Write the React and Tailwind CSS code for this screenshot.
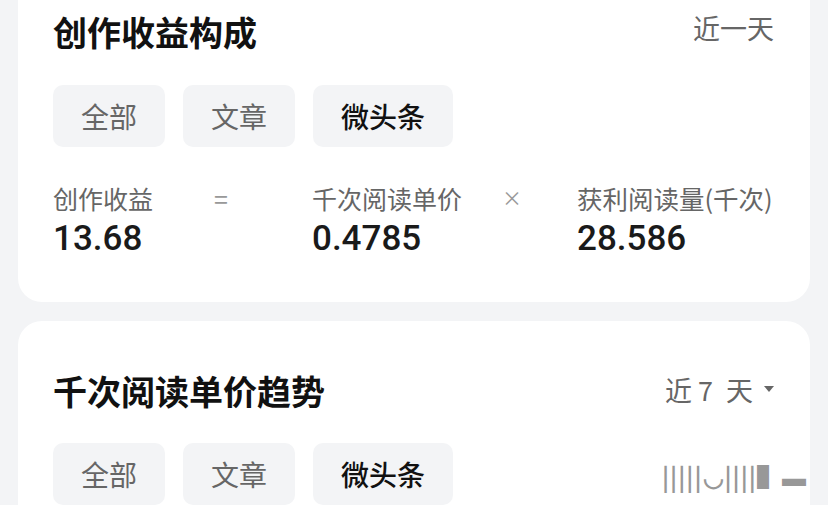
import React from 'react';

const FONT = { fontFamily: '"Noto Sans CJK SC", "Noto Sans", sans-serif' };
const NUM = { fontFamily: 'Roboto, "Noto Sans CJK SC", sans-serif' };

const TABS = ['全部', '文章', '微头条'];

function Tabs({ active }) {
  return (
    <div className="flex gap-[18px]">
      {TABS.map(t => (
        <div key={t}
          className={`h-[62px] px-[28px] flex items-center justify-center rounded-[10px] bg-[#f3f4f6] text-[28px] leading-none ${t === active ? 'text-[#111] font-medium' : 'text-[#666]'}`}>
          {t}
        </div>
      ))}
    </div>
  );
}

export default function App() {
  return (
    <div className="w-[828px] h-[505px] overflow-hidden bg-[#f3f4f6] px-[18px] relative" style={FONT}>
      {/* 收益构成 */}
      <div className="bg-white rounded-b-[24px] pl-[35px] pr-[36px] pt-[12px] pb-[43px]">
        <div className="flex items-center justify-between h-[40px]">
          <h2 className="text-[34px] font-bold text-[#111] leading-none">创作收益构成</h2>
          <span className="text-[27px] text-[#666] leading-none -mt-[10px]">近一天</span>
        </div>
        <div className="mt-[33px]">
          <Tabs active="微头条" />
        </div>
        <div className="flex mt-[35px]">
          <div className="w-[161px]">
            <p className="text-[25px] leading-[32px] text-[#666]">创作收益</p>
            <p className="text-[35px] leading-[40px] font-medium text-[#1a1a1a] mt-[5px]" style={NUM}>13.68</p>
          </div>
          <div className="w-[98px] text-[25px] leading-[32px] text-[#999]">=</div>
          <div className="w-[190px]">
            <p className="text-[25px] leading-[32px] text-[#666]">千次阅读单价</p>
            <p className="text-[35px] leading-[40px] font-medium text-[#1a1a1a] mt-[5px]" style={NUM}>0.4785</p>
          </div>
          <div className="w-[75px] text-[20px] leading-[32px] text-[#999]">×</div>
          <div className="flex-1">
            <p className="text-[25.5px] leading-[32px] text-[#666] whitespace-nowrap">获利阅读量(千次)</p>
            <p className="text-[35px] leading-[40px] font-medium text-[#1a1a1a] mt-[5px]" style={NUM}>28.586</p>
          </div>
        </div>
      </div>

      {/* 单价趋势 */}
      <div className="bg-white rounded-[24px] mt-[19px] pl-[35px] pr-[36px] pt-[50px] pb-[40px]">
        <div className="flex items-center justify-between h-[40px]">
          <h2 className="text-[34px] font-bold text-[#111] leading-none">千次阅读单价趋势</h2>
          <div className="flex items-center text-[27px] text-[#666] leading-none -mt-[4px]">
            <span>近</span>
            <span className="ml-[6px]">7</span>
            <span className="ml-[13px]">天</span>
            <svg className="ml-[11px]" width="10" height="6" viewBox="0 0 10 6"><path d="M0 0h10L5 6z" fill="#666" /></svg>
          </div>
        </div>
        <div className="mt-[32px]">
          <Tabs active="微头条" />
        </div>
      </div>

      <div className="absolute left-[662px] top-[464px] text-[24px] font-bold leading-none text-[#555] opacity-60 tracking-[1px] whitespace-nowrap">
        |||||◡||||▌▬
      </div>
    </div>
  );
}
